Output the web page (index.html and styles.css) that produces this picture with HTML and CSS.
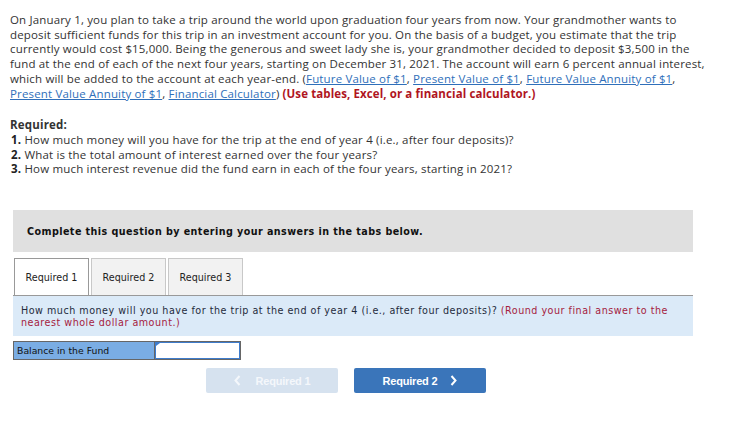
FILE: index.html
```html
<!DOCTYPE html>
<html>
<head>
<meta charset="utf-8">
<link rel="stylesheet" href="styles.css">
</head>
<body>
<div class="page">
  <p class="problem">On January 1, you plan to take a trip around the world upon graduation four years from now. Your grandmother wants to<br>deposit sufficient funds for this trip in an investment account for you. On the basis of a budget, you estimate that the trip<br>currently would cost $15,000. Being the generous and sweet lady she is, your grandmother decided to deposit $3,500 in the<br>fund at the end of each of the next four years, starting on December 31, 2021. The account will earn 6 percent annual interest,<br>which will be added to the account at each year-end. (<a href="#">Future Value of $1</a>, <a href="#">Present Value of $1</a>, <a href="#">Future Value Annuity of $1</a>,<br><a href="#">Present Value Annuity of $1</a>, <a href="#">Financial Calculator</a>) <b class="warn">(Use tables, Excel, or a financial calculator.)</b></p>

  <div class="required">
    <div class="req-title">Required:</div>
    <div class="req-item"><b>1.</b> How much money will you have for the trip at the end of year 4 (i.e., after four deposits)?</div>
    <div class="req-item"><b>2.</b> What is the total amount of interest earned over the four years?</div>
    <div class="req-item"><b>3.</b> How much interest revenue did the fund earn in each of the four years, starting in 2021?</div>
  </div>

  <div class="panel">
    <div class="banner">Complete this question by entering your answers in the tabs below.</div>
    <div class="tabs">
      <div class="tab active">Required 1</div>
      <div class="tab">Required 2</div>
      <div class="tab">Required 3</div>
    </div>
    <div class="question">How much money will you have for the trip at the end of year 4 (i.e., after four deposits)? <span class="note">(Round your final answer to the nearest whole dollar amount.)</span></div>
    <div class="answer-row">
      <div class="answer-label">Balance in the Fund</div>
      <div class="answer-input"><span class="flag"></span></div>
    </div>
    <div class="nav">
      <div class="btn prev"><svg class="chev left" width="7" height="11" viewBox="0 0 7 11"><path d="M5.5 1 L1.5 5.5 L5.5 10" fill="none" stroke="currentColor" stroke-width="2"/></svg>Required 1</div>
      <div class="btn next">Required 2<svg class="chev right" width="7" height="11" viewBox="0 0 7 11"><path d="M1.5 1 L5.5 5.5 L1.5 10" fill="none" stroke="currentColor" stroke-width="2"/></svg></div>
    </div>
  </div>
</div>
</body>
</html>
```

FILE: styles.css
```css
* { box-sizing: border-box; }
html, body { margin: 0; padding: 0; background: #fff; }
.page {
  padding: 13px 10px 0 10px;
  font-family: "Open Sans", "Liberation Sans", sans-serif;
  color: #333;
}
.problem {
  margin: 0;
  font-size: 11.5px;
  line-height: 14.7px;
  letter-spacing: 0.16px;
  white-space: nowrap;
}
.problem a { color: #2f6fba; text-decoration: underline; }
.problem .warn { color: #b0151e; font-weight: 700; letter-spacing: 0.1px; }
.required {
  margin-top: 17px;
  font-size: 11.5px;
  line-height: 14.7px;
  letter-spacing: 0.18px;
}
.req-title { font-weight: 700; }
.req-item { padding-left: 1px; }
.req-item b { font-weight: 700; color: #222; }

.panel {
  margin-top: 33px;
  width: 680px;
  margin-left: 3px;
  font-family: "DejaVu Sans", Verdana, sans-serif;
}
.banner {
  background: #e0e0e0;
  height: 42px;
  padding: 0 0 0 14px;
  display: flex;
  align-items: center;
  font-size: 9.6px;
  font-weight: 700;
  color: #111;
  letter-spacing: 0.43px;
}
.tabs {
  display: flex;
  gap: 2px;
  margin-top: 6px;
  padding-left: 1px;
}
.tab {
  height: 37px;
  width: 75px;
  display: flex;
  align-items: center;
  justify-content: center;
  font-size: 9.6px;
  color: #222;
  background: #f2f2f2;
  border: 1px solid #c8c8c8;
  border-bottom: none;
  white-space: nowrap;
}
.tab.active { background: #fff; border-color: #999; }
.question {
  background: #dbeaf8;
  border-top: 1px solid #999;
  padding: 9px 20px 8px 8px;
  height: 41px;
  font-size: 9.6px;
  line-height: 12px;
  color: #1f2a3c;
  letter-spacing: 0.5px;
}
.question .note { color: #a5213e; }
.answer-row {
  display: flex;
  margin-top: 5px;
  height: 19px;
}
.answer-label {
  width: 141px;
  background: #7aade4;
  border: 1px solid #666;
  border-right: none;
  font-size: 9.3px;
  color: #111;
  padding: 3px 3px 0 3px;
  line-height: 12px;
}
.answer-input {
  width: 87px;
  background: #fff;
  border: 1px solid #666;
  box-shadow: inset 0 0 0 1px #3e7ccc;
  position: relative;
}
.flag {
  position: absolute;
  left: 1px;
  top: 1px;
  width: 0; height: 0;
  border-top: 3px solid #3e7ccc;
  border-right: 4px solid transparent;
}
.nav {
  display: flex;
  gap: 16px;
  margin-top: 8px;
  margin-left: 193px;
}
.btn {
  width: 132px;
  height: 25px;
  border-radius: 2px;
  display: flex;
  align-items: center;
  justify-content: center;
  font-family: "Liberation Sans", Arial, sans-serif;
  font-weight: 700;
  font-size: 11px;
  letter-spacing: -0.2px;
  color: #fff;
}
.btn.prev { background: #d6e2ef; color: #f4f7fb; }
.btn.next { background: #3a75ba; }
.chev.left { margin-right: 15px; }
.chev.right { margin-left: 13px; }
```
